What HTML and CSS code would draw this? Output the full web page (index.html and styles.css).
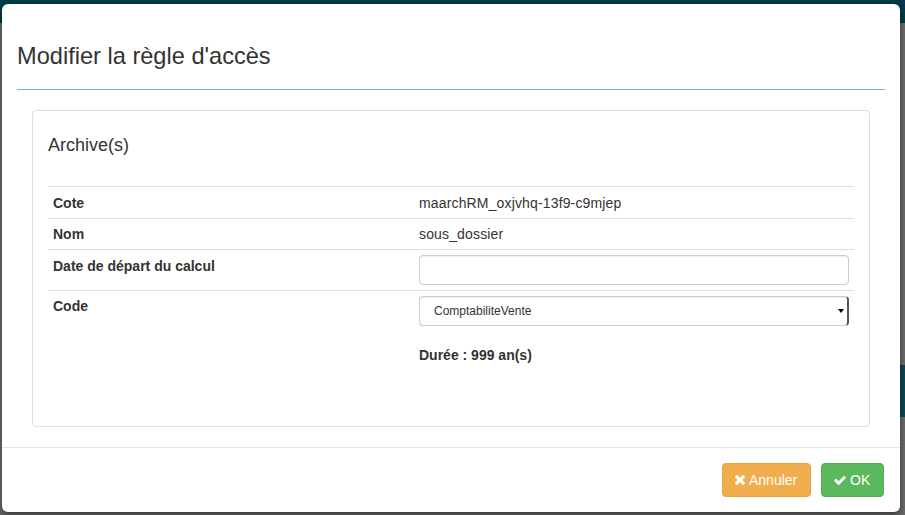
FILE: index.html
```html
<!DOCTYPE html>
<html lang="fr">
<head>
<meta charset="utf-8">
<title>Modifier la règle d'accès</title>
<link rel="stylesheet" href="styles.css">
</head>
<body>
<div class="page">
  <div class="topbar"></div>
  <div class="band"></div>
</div>

<div class="modal">
  <div class="modal-header">
    <h3 class="modal-title">Modifier la règle d'accès</h3>
  </div>
  <div class="modal-body">
    <div class="panel">
      <h4 class="panel-title">Archive(s)</h4>
      <table class="info">
        <tr class="r1">
          <th>Cote</th>
          <td>maarchRM_oxjvhq-13f9-c9mjep</td>
        </tr>
        <tr class="r2">
          <th>Nom</th>
          <td>sous_dossier</td>
        </tr>
        <tr class="r3">
          <th>Date de départ du calcul</th>
          <td><div class="input"></div></td>
        </tr>
        <tr class="r4">
          <th>Code</th>
          <td>
            <div class="select"><span>ComptabiliteVente</span><span class="arrow"></span></div>
            <div class="duree">Durée : 999 an(s)</div>
          </td>
        </tr>
      </table>
    </div>
  </div>
  <div class="modal-footer">
    <button class="btn btn-warning"><svg class="ico-x" viewBox="110 366 1188 1188"><path fill="#fff" d="M1298 1322q0 40-28 68l-136 136q-28 28-68 28t-68-28l-294-294-294 294q-28 28-68 28t-68-28l-136-136q-28-28-28-68t28-68l294-294-294-294q-28-28-28-68t28-68l136-136q28-28 68-28t68 28l294 294 294-294q28-28 68-28t68 28l136 136q28 28 28 68t-28 68l-294 294 294 294q28 28 28 68z"/></svg>Annuler</button>
    <button class="btn btn-success"><svg class="ico-check" viewBox="121 334 1550 1188"><path fill="#fff" d="M1671 566q0 40-28 68l-724 724-136 136q-28 28-68 28t-68-28l-136-136-362-362q-28-28-28-68t28-68l136-136q28-28 68-28t68 28l294 295 656-657q28-28 68-28t68 28l136 136q28 28 28 68z"/></svg>OK</button>
  </div>
</div>
</body>
</html>
```
FILE: styles.css
```css
* { box-sizing: border-box; }
html, body { margin: 0; padding: 0; }
body {
  width: 905px;
  height: 515px;
  overflow: hidden;
  background: #686868;
  font-family: "Liberation Sans", Arial, sans-serif;
  font-size: 14px;
  color: #333;
  position: relative;
}
.page {
  display: flex;
  flex-direction: column;
  height: 515px;
}
.topbar {
  height: 23px;
  background: #013a47;
}
.band {
  align-self: flex-end;
  width: 40px;
  height: 52px;
  margin-top: 342px;
  background: #0b4554;
}
.modal {
  position: absolute;
  left: 2px;
  top: 4px;
  width: 898px;
  background: #fff;
  border-radius: 6px;
  box-shadow: 0 3px 6px rgba(0,0,0,0.45);
  display: flex;
  flex-direction: column;
}
.modal-header {
  margin: 0 15px;
  padding: 38px 0 18px;
  border-bottom: 1px solid #5bc0de;
}
.modal-title {
  margin: 0;
  font-size: 23.6px;
  font-weight: normal;
  line-height: 29px;
  color: #333;
}
.modal-body {
  padding: 20px 30px 20px 30px;
}
.panel {
  border: 1px solid #ddd;
  border-radius: 4px;
  padding: 24px 15px 56px;
}
.panel-title {
  margin: 0 0 31px;
  font-size: 18px;
  font-weight: normal;
  line-height: 20px;
  color: #333;
}
.info {
  width: 100%;
  border-collapse: collapse;
}
.info th, .info td {
  border-top: 1px solid #ddd;
  text-align: left;
  vertical-align: top;
  padding: 6px 5px 5px;
  line-height: 20px;
}
.info td { letter-spacing: 0.15px; }
.info th {
  width: 366px;
  font-weight: bold;
}
.info tr.r2 th, .info tr.r2 td { padding: 5px 5px 5px; }
.info tr.r3 th { padding: 6px 5px 5px; }
.info tr.r3 td { padding: 5px 5px 5px; }
.info tr.r4 th { padding: 5px 5px; }
.info tr.r4 td { padding: 5px 5px; }
.input {
  height: 30px;
  border: 1px solid #ccc;
  border-radius: 4px;
  box-shadow: inset 0 1px 1px rgba(0,0,0,0.075);
}
.select {
  height: 30px;
  border: 1px solid #ccc;
  border-right: 2px solid #555;
  border-radius: 4px;
  display: flex;
  align-items: center;
  justify-content: space-between;
  padding: 0 3px 0 14px;
  font-size: 12px;
  letter-spacing: 0;
  color: #333;
  box-shadow: inset 0 1px 1px rgba(0,0,0,0.075);
}
.arrow {
  width: 0;
  height: 0;
  border-left: 3.5px solid transparent;
  border-right: 3.5px solid transparent;
  border-top: 4px solid #000;
}
.duree {
  margin-top: 19px;
  font-weight: bold;
  line-height: 20px;
  letter-spacing: 0;
}
.modal-footer {
  border-top: 1px solid #e5e5e5;
  padding: 15px 16px 15px 15px;
  display: flex;
  justify-content: flex-end;
  gap: 10px;
}
.btn {
  height: 34px;
  border: 1px solid transparent;
  border-radius: 4px;
  padding: 0 12px;
  font-family: "Liberation Sans", Arial, sans-serif;
  font-size: 14px;
  color: #fff;
  display: flex;
  align-items: center;
  gap: 4px;
}
.btn-warning { background: #f0ad4e; border-color: #eea236; width: 89px; }
.btn-success { background: #5cb85c; border-color: #4cae4c; width: 63px; }
.ico-x { width: 10px; height: 10px; }
.ico-check { width: 12px; height: 9px; }
```
